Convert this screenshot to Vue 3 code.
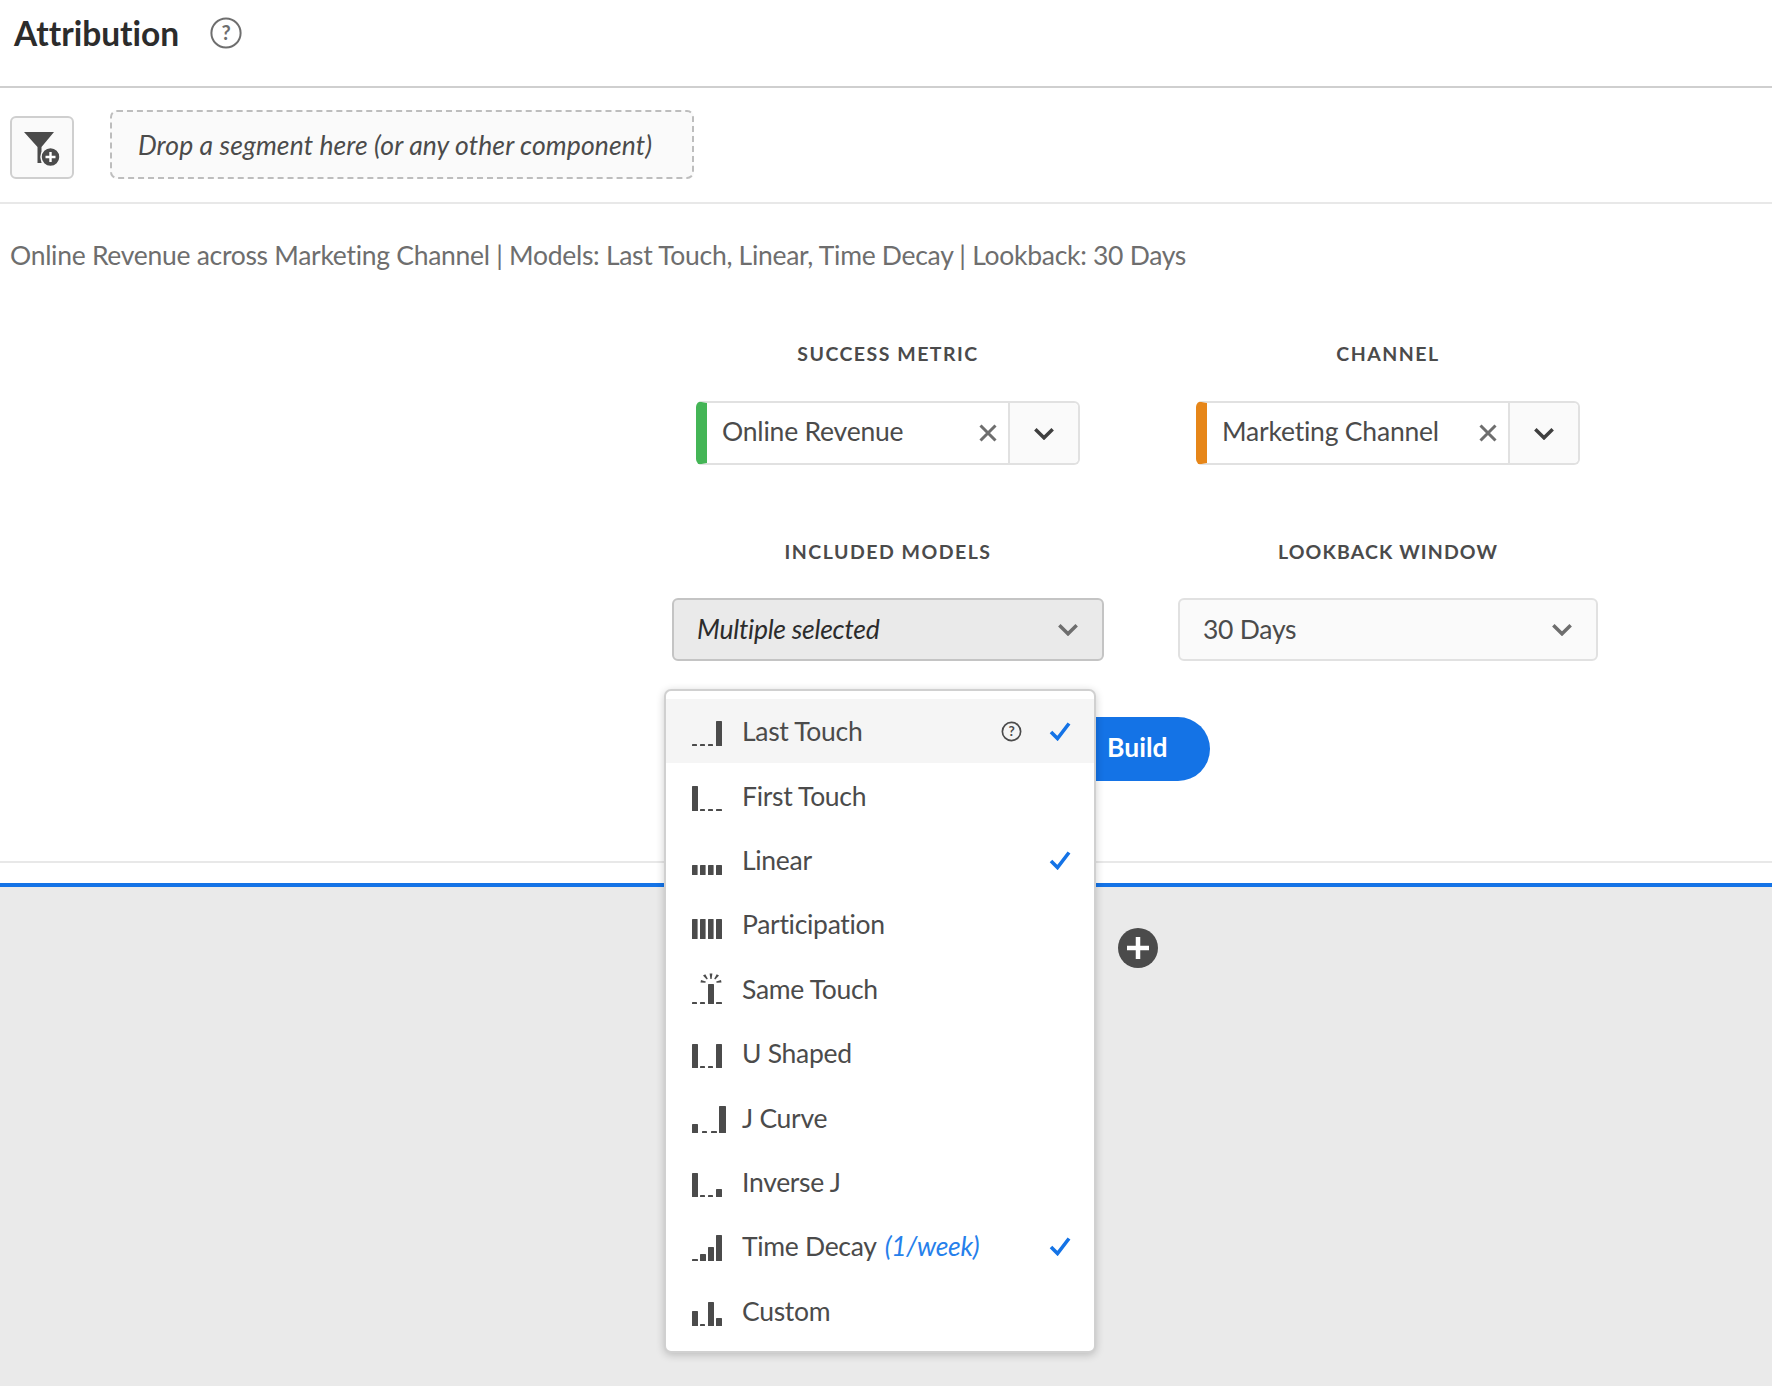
<script setup>
const dash = (x, w = 5) => ({ x, w, h: 2 })
const bar = (x, w, h) => ({ x, w, h })
const models = [
  { name: 'Last Touch', checked: true, help: true, active: true, icon: [dash(0), dash(8), dash(16), bar(24, 6, 25)] },
  { name: 'First Touch', icon: [bar(0, 6, 25), dash(8), dash(16), dash(24, 6)] },
  { name: 'Linear', checked: true, icon: [bar(0, 5.6, 10), bar(8, 5.6, 10), bar(16, 5.6, 10), bar(24, 6, 10)] },
  { name: 'Participation', icon: [bar(0, 5.6, 20), bar(8, 5.6, 20), bar(16, 5.6, 20), bar(24, 6, 20)] },
  { name: 'Same Touch', spark: true, icon: [dash(0), dash(8), bar(16, 6, 20), dash(24, 6)] },
  { name: 'U Shaped', icon: [bar(0, 6, 24), dash(8), dash(16), bar(24, 6, 24)] },
  { name: 'J Curve', wide: true, icon: [bar(0, 6, 9), dash(10, 5), dash(19, 6), bar(27, 7, 27)] },
  { name: 'Inverse J', icon: [bar(0, 6, 24), dash(8), dash(16), bar(24, 6, 8)] },
  { name: 'Time Decay', note: '(1/week)', checked: true, icon: [dash(0, 6), bar(8, 6, 7), bar(16, 6, 14), bar(24, 6, 26)] },
  { name: 'Custom', icon: [bar(0, 6, 15), dash(8), bar(16, 6, 24), bar(24, 6, 8)] }
]
</script>

<template>
  <div class="page">
    <header class="header">
      <h1 class="title">Attribution</h1>
      <svg class="help" viewBox="0 0 32 32">
        <circle cx="16" cy="16" r="14.6" fill="none" stroke="#6e6e6e" stroke-width="2" />
        <text x="16" y="22.500" text-anchor="middle" class="help-mark">?</text>
      </svg>
    </header>

    <div class="toolbar">
      <button class="filter">
        <svg viewBox="0 0 40 38" width="40" height="38">
          <path d="M2 2h30L19.500 17V33h-4V17z" fill="#4b4b4b" />
          <circle cx="28.500" cy="27" r="9.500" fill="#4b4b4b" stroke="#fafafa" stroke-width="1.500" />
          <path d="M28.500 22v10M23.500 27h10" stroke="#fff" stroke-width="2.400" />
        </svg>
      </button>
      <div class="dropzone">Drop a segment here (or any other component)</div>
    </div>

    <section class="builder">
      <p class="summary">Online Revenue across Marketing Channel | Models: Last Touch, Linear, Time Decay | Lookback: 30 Days</p>

      <div class="form">
        <div class="field">
          <label class="label">SUCCESS METRIC</label>
          <div class="chip green">
            <span class="chip-text">Online Revenue</span>
            <svg class="clear" viewBox="0 0 16 16"><path d="M2 2l12 12M14 2L2 14" /></svg>
            <span class="chip-arrow"><svg class="chev dark" viewBox="0 0 20 12"><path d="M2 2l8 8 8-8" /></svg></span>
          </div>
        </div>
        <div class="field">
          <label class="label">CHANNEL</label>
          <div class="chip orange">
            <span class="chip-text">Marketing Channel</span>
            <svg class="clear" viewBox="0 0 16 16"><path d="M2 2l12 12M14 2L2 14" /></svg>
            <span class="chip-arrow"><svg class="chev dark" viewBox="0 0 20 12"><path d="M2 2l8 8 8-8" /></svg></span>
          </div>
        </div>
        <div class="field">
          <label class="label">INCLUDED MODELS</label>
          <div class="select open">
            <span class="italic">Multiple selected</span>
            <svg class="chev" viewBox="0 0 20 12"><path d="M2 2l8 8 8-8" /></svg>
          </div>
        </div>
        <div class="field">
          <label class="label tight">LOOKBACK WINDOW</label>
          <div class="select">
            <span>30 Days</span>
            <svg class="chev" viewBox="0 0 20 12"><path d="M2 2l8 8 8-8" /></svg>
          </div>
        </div>
      </div>

      <button class="build">Build</button>
    </section>

    <div class="panel">
      <svg class="add" viewBox="0 0 40 40">
        <circle cx="20" cy="20" r="20" fill="#4b4b4b" />
        <path d="M20 9v22M9 20h22" stroke="#fff" stroke-width="4.500" />
      </svg>
    </div>

    <ul class="menu">
      <li v-for="m in models" :key="m.name" class="item" :class="{ active: m.active }">
        <svg class="model-icon" width="36" height="36" viewBox="0 0 36 36">
          <rect v-for="(b, i) in m.icon" :key="i" :x="b.x" :y="34 - b.h" :width="b.w" :height="b.h" rx=".6" fill="#4b4b4b" />
          <g v-if="m.spark" fill="#4b4b4b">
            <path d="M17.600 3.500h2.800l-.8 5.500h-1.200z" />
            <path d="M11 5.500l2.300-1.300 2.500 4.600-1.100.7z" />
            <path d="M27 5.500l-2.300-1.300-2.500 4.600 1.100.7z" />
            <path d="M8.500 12.500l.5-2.600 4.800 1.600-.4 1.200z" />
            <path d="M29.500 12.500l-.5-2.600-4.800 1.600.4 1.200z" />
          </g>
        </svg>
        <span class="item-name">{{ m.name }}<em v-if="m.note" class="note">{{ m.note }}</em></span>
        <svg v-if="m.help" class="item-help" viewBox="0 0 20 20">
          <circle cx="10" cy="10" r="8.700" fill="none" stroke="#4b4b4b" stroke-width="1.600" />
          <text x="10" y="14.500" text-anchor="middle" class="item-help-mark">?</text>
        </svg>
        <svg v-if="m.checked" class="check" viewBox="0 0 22 20"><path d="M2 11l6.500 6.500L20 2.500" /></svg>
      </li>
    </ul>
  </div>
</template>

<style>
html, body { margin: 0; background: #fff; }
</style>

<style scoped>
.page {
  position: relative;
  display: flex;
  flex-direction: column;
  width: 1772px;
  height: 1386px;
  overflow: hidden;
  background: #fff;
  font-family: Lato, "Noto Sans", sans-serif;
  font-variant-ligatures: none;
  color: #4b4b4b;
}
.header {
  box-sizing: border-box;
  height: 88px;
  padding: 0 0 20px 14px;
  display: flex;
  align-items: center;
  gap: 31px;
  border-bottom: 2px solid #cfcfcf;
}
.title { margin: 0; padding-top: 2px; font-size: 33.500px; font-weight: 700; color: #2c2c2c; line-height: 1; }
.help { width: 32px; height: 32px; }
.help-mark { font-size: 20px; fill: #6e6e6e; font-family: Lato, sans-serif; font-weight: 700; }
.toolbar {
  box-sizing: border-box;
  height: 116px;
  padding: 0 0 23px 10px;
  display: flex;
  align-items: flex-end;
  gap: 36px;
  border-bottom: 2px solid #e8e8e8;
}
.filter {
  box-sizing: border-box;
  width: 64px;
  height: 63px;
  padding: 12px 0 0 10px;
  display: flex;
  align-items: flex-start;
  border: 2px solid #cfcfcf;
  border-radius: 6px;
  background: #fafafa;
}
.dropzone {
  box-sizing: border-box;
  width: 584px;
  height: 69px;
  padding-left: 26px;
  display: flex;
  align-items: center;
  border: 2px dashed #bdbdbd;
  border-radius: 7px;
  background: #fafafa;
  font-size: 26.500px;
  letter-spacing: 0.100px;
  font-style: italic;
  color: #4b4b4b;
}
.builder {
  box-sizing: border-box;
  height: 659px;
  border-bottom: 2px solid #e8e8e8;
  display: flex;
  flex-direction: column;
}
.summary {
  margin: 35px 0 0 10px;
  font-size: 26.500px;
  letter-spacing: -0.290px;
  line-height: 32px;
  color: #6e6e6e;
}
.form {
  margin: 71px 0 0 672px;
  display: grid;
  grid-template-columns: 432px 420px;
  column-gap: 74px;
  row-gap: 75px;
}
.field { display: flex; flex-direction: column; align-items: center; gap: 35px; }
.field:nth-child(n+3) { gap: 34px; }
.label {
  font-size: 19.500px;
  line-height: 24px;
  font-weight: 700;
  letter-spacing: 1.500px;
  color: #4b4b4b;
}
.label.tight { letter-spacing: 1.130px; }
.chip {
  box-sizing: border-box;
  width: 384px;
  height: 64px;
  display: flex;
  align-items: center;
  background: #fff;
  border: 2px solid #e1e1e1;
  border-left: 11px solid;
  border-radius: 6px;
}
.chip.green { border-left-color: #44b556; }
.chip.orange { border-left-color: #e68619; }
.chip-text { flex: 1; padding: 0 0 4px 15px; font-size: 26.500px; letter-spacing: -0.200px; color: #4b4b4b; }
.clear { width: 20px; height: 20px; margin-right: 10px; fill: none; stroke: #6e6e6e; stroke-width: 2.400; }
.chip-arrow {
  box-sizing: border-box;
  width: 70px;
  height: 100%;
  display: flex;
  align-items: center;
  justify-content: center;
  background: #fafafa;
  border-left: 2px solid #e1e1e1;
  border-radius: 0 5px 5px 0;
}
.chev { width: 22px; height: 13px; fill: none; stroke: #6e6e6e; stroke-width: 3.200; }
.chev.dark { stroke: #3f3f3f; }
.select {
  box-sizing: border-box;
  width: 100%;
  height: 63px;
  padding: 0 23px 1px;
  display: flex;
  align-items: center;
  justify-content: space-between;
  font-size: 26.500px;
  letter-spacing: -0.250px;
  background: #fafafa;
  border: 2px solid #e1e1e1;
  border-radius: 6px;
}
.select.open { background: #eaeaea; border-color: #c4c4c4; color: #2c2c2c; }
.italic { font-style: italic; }
.build {
  box-sizing: border-box;
  width: 150px;
  height: 64px;
  margin: 56px 0 0 1060px;
  padding: 0 0 4px 47px;
  text-align: left;
  border: 0;
  border-radius: 32px;
  background: #1473e6;
  color: #fff;
  font: 700 26.500px Lato, sans-serif;
}
.panel {
  flex: 1;
  margin-top: 20px;
  padding: 41px 0 0 1118px;
  background: #eaeaea;
  border-top: 4px solid #1473e6;
}
.add { display: block; width: 40px; height: 40px; }
.menu {
  position: absolute;
  left: 664px;
  top: 689px;
  box-sizing: border-box;
  width: 432px;
  height: 664px;
  margin: 0;
  padding: 8px 0 0;
  list-style: none;
  background: #fff;
  border: 2px solid #d0d0d0;
  border-radius: 7px;
  box-shadow: 0 2px 8px rgba(0, 0, 0, .2);
}
.item {
  height: 64.400px;
  padding: 0 23px 0 26px;
  display: flex;
  align-items: center;
  font-size: 26.500px;
  letter-spacing: -0.300px;
  color: #4b4b4b;
}
.item.active { background: #f5f5f5; }
.model-icon { flex: none; margin: 0 14px 2px 0; }
.item-name { flex: 1; white-space: nowrap; }
.note { margin-left: 8px; color: #2680eb; }
.item-help { width: 21px; height: 21px; margin-right: 27px; }
.item-help-mark { font-size: 13px; fill: #4b4b4b; font-family: Lato, sans-serif; font-weight: 700; }
.check { width: 22px; height: 20px; fill: none; stroke: #1473e6; stroke-width: 3.600; }
</style>
